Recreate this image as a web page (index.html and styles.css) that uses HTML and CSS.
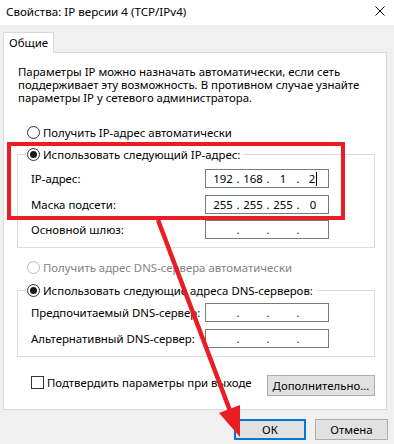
FILE: index.html
```html
<!DOCTYPE html>
<html lang="ru">
<head>
    <meta charset="UTF-8">
    <meta name="viewport" content="width=device-width, initial-scale=1.0">
    <title>Свойства: IP версии 4 (TCP/IPv4)</title>
    <link rel="stylesheet" href="styles.css">
</head>
<body>
    <div class="window">
        <div class="titlebar">
            <span class="title">Свойства: IP версии 4 (TCP/IPv4)</span>
            <svg class="close" width="10" height="10" viewBox="0 0 10 10">
                <path d="M0.5 0.5 L9.5 9.5 M9.5 0.5 L0.5 9.5" stroke="#000" stroke-width="1" fill="none"/>
            </svg>
        </div>

        <div class="tabs">
            <div class="tab">Общие</div>
        </div>

        <div class="panel">
            <p class="intro">Параметры IP можно назначать автоматически, если сеть<br>поддерживает эту возможность. В противном случае узнайте<br>параметры IP у сетевого администратора.</p>

            <div class="radio auto-ip"><span class="radio-dot"></span>Получить IP-адрес автоматически</div>

            <div class="group ip-group">
                <div class="legend"><span class="radio-dot checked"></span>Использовать следующий IP-адрес:</div>
                <div class="fields">
                    <span class="label">IP-адрес:</span>
                    <div class="ip">
                        <span>192</span><i>.</i><span>168</span><i>.</i><span>1</span><i>.</i><span>2<b class="caret"></b></span>
                    </div>
                    <span class="label">Маска подсети:</span>
                    <div class="ip">
                        <span>255</span><i>.</i><span>255</span><i>.</i><span>255</span><i>.</i><span>0</span>
                    </div>
                    <span class="label">Основной шлюз:</span>
                    <div class="ip empty">
                        <span></span><i>.</i><span></span><i>.</i><span></span><i>.</i><span></span>
                    </div>
                </div>
            </div>

            <div class="radio auto-dns disabled"><span class="radio-dot"></span>Получить адрес DNS-сервера автоматически</div>

            <div class="group dns-group">
                <div class="legend"><span class="radio-dot checked"></span>Использовать следующие адреса DNS-серверов:</div>
                <div class="fields">
                    <span class="label">Предпочитаемый DNS-сервер:</span>
                    <div class="ip empty">
                        <span></span><i>.</i><span></span><i>.</i><span></span><i>.</i><span></span>
                    </div>
                    <span class="label">Альтернативный DNS-сервер:</span>
                    <div class="ip empty">
                        <span></span><i>.</i><span></span><i>.</i><span></span><i>.</i><span></span>
                    </div>
                </div>
            </div>

            <div class="panel-bottom">
                <div class="check"><span class="check-box"></span>Подтвердить параметры при выходе</div>
                <button class="btn advanced">Дополнительно...</button>
            </div>
        </div>

        <div class="footer">
            <button class="btn ok">ОК</button>
            <button class="btn cancel">Отмена</button>
        </div>

        <!-- annotation drawn over the dialog -->
        <svg class="annotation" width="394" height="444" viewBox="0 0 394 444">
            <rect x="9" y="144" width="334" height="74" fill="none" stroke="#ea1c24" stroke-width="4"/>
            <line x1="158" y1="220" x2="232" y2="416" stroke="#ea1c24" stroke-width="4.5"/>
            <polygon points="240,437 219,413 240,405" fill="#ea1c24"/>
        </svg>
    </div>
</body>
</html>
```

FILE: styles.css
```css
* {
    margin: 0;
    padding: 0;
    box-sizing: border-box;
}

body {
    font-family: "Noto Sans", "Liberation Sans", sans-serif;
    font-size: 11.4px;
    color: #000;
    background: #f0f0f0;
    overflow: hidden;
}

.window {
    position: relative;
    width: 394px;
    height: 444px;
    background: #f0f0f0;
}

.titlebar {
    height: 25px;
    background: #fff;
    display: flex;
    justify-content: space-between;
    align-items: flex-start;
    padding: 4px 9px 0 6px;
    line-height: 15px;
    font-size: 11.6px;
}

.close {
    margin-top: 2px;
}

.tabs {
    padding: 7px 0 0 3px;
    display: flex;
}

.tab {
    position: relative;
    z-index: 1;
    width: 51px;
    height: 21px;
    margin-bottom: -1px;
    background: #fff;
    border: 1px solid #d9d9d9;
    border-bottom: none;
    text-align: center;
    line-height: 19px;
}

.panel {
    margin-left: 3px;
    width: 384px;
    height: 358px;
    background: #fff;
    border: 1px solid #d9d9d9;
}

.intro {
    margin: 12px 0 0 14px;
    line-height: 13px;
    white-space: nowrap;
}

.radio,
.legend,
.check {
    display: flex;
    align-items: center;
    height: 13px;
    line-height: 13px;
    white-space: nowrap;
}

.radio {
    margin-left: 23px;
}

.auto-ip {
    margin-top: 22px;
}

.auto-dns {
    margin-top: 12.5px;
}

.disabled {
    color: #838383;
}

.radio-dot {
    width: 13px;
    height: 13px;
    border: 1px solid #333;
    border-radius: 50%;
    margin-right: 3px;
    display: flex;
    align-items: center;
    justify-content: center;
    flex-shrink: 0;
    background: #fff;
}

.disabled .radio-dot {
    border-color: #bcbcbc;
}

.radio-dot.checked::after {
    content: "";
    width: 7px;
    height: 7px;
    border-radius: 50%;
    background: #1a1a1a;
}

.group {
    margin-left: 13px;
    width: 358px;
    border: 1px solid #dcdcdc;
    padding: 0 0 8px 13px;
}

.ip-group {
    margin-top: 15px;
}

.dns-group {
    margin-top: 16.5px;
}

.legend {
    margin: -7px 0 0 -4px;
    padding-right: 3px;
    background: #fff;
    width: max-content;
}

.fields {
    display: grid;
    grid-template-columns: 174px 124px;
    align-items: center;
}

.label {
    white-space: nowrap;
}

.ip-group .fields {
    margin-top: 8px;
    row-gap: 6.5px;
}

.dns-group .fields {
    margin-top: 6px;
    row-gap: 7px;
}

.ip {
    height: 19px;
    border: 1px solid #7a7a7a;
    display: grid;
    grid-template-columns: 1fr 6px 1fr 6px 1fr 6px 1fr;
    padding: 0 3px 0 5px;
    align-items: center;
    line-height: 17px;
}

.ip span {
    text-align: center;
}

.ip i {
    font-style: normal;
    text-align: center;
}

.ip.empty i {
    color: #1c1c7a;
}

.caret {
    display: inline-block;
    width: 1px;
    height: 14px;
    margin-left: 1px;
    background: #000;
    vertical-align: -3px;
}

.panel-bottom {
    margin: 19px 0 0 13px;
    width: 358px;
    display: flex;
    justify-content: space-between;
    align-items: flex-start;
}

.check {
    padding-left: 14px;
}

.check-box {
    width: 13px;
    height: 13px;
    border: 1px solid #333;
    margin-right: 3px;
    background: #fff;
}

.btn {
    font-family: inherit;
    font-size: 11.4px;
    color: #000;
    height: 21px;
    background: #e1e1e1;
    border: 1px solid #adadad;
    white-space: nowrap;
}

.advanced {
    width: 108px;
    margin-top: -1px;
}

.footer {
    display: flex;
    justify-content: flex-end;
    gap: 9px;
    padding: 9px 6px 0 0;
}

.ok {
    width: 72px;
    border: 2px solid #0078d7;
}

.cancel {
    width: 73px;
}

.annotation {
    position: absolute;
    top: 0;
    left: 0;
    pointer-events: none;
}
```
